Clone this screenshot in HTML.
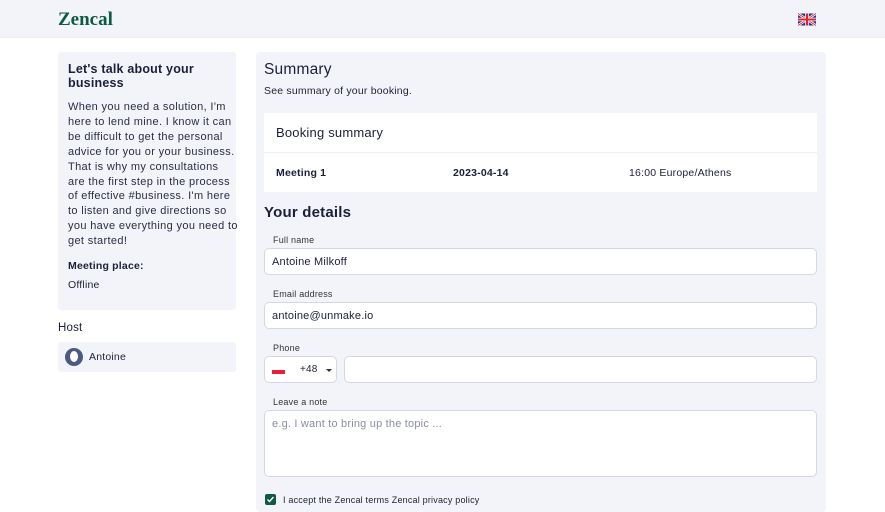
<!DOCTYPE html><html><head><style>
*{box-sizing:border-box;margin:0;padding:0}
body{width:885px;height:502px;overflow:hidden;background:#fff;font-family:"Liberation Sans",sans-serif;color:#1c1f3a;position:relative;letter-spacing:0.2px}
.hdr{position:absolute;left:0;top:0;width:885px;height:38px;background:#f3f4f9;border-bottom:1px solid #eceef4}
.logo{position:absolute;left:58px;top:9px;font-family:"Liberation Serif",serif;font-weight:bold;font-size:19px;color:#0e5a43;letter-spacing:0}
.abs{position:absolute}
.lc{left:58px;top:52px;width:178px;height:258px;background:#f3f4f9;border-radius:3px;padding:10px}
.mc{left:256px;top:52px;width:570px;height:460px;background:#f3f4f9;border-radius:4px}
.lbl{font-size:9px;color:#333;position:absolute;left:273px}
.inp{position:absolute;left:264px;width:553px;height:27px;background:#fff;border:1px solid #d5d8e3;border-radius:5px;font-size:11px;padding:7px 7px}
</style></head><body>
<div class="hdr"><div class="logo">Zencal</div>
<svg class="abs" style="left:798px;top:13px" width="18" height="13" viewBox="0 0 60 40"><rect width="60" height="40" fill="#1f3a93"/><path d="M0 0L60 40M60 0L0 40" stroke="#fff" stroke-width="8"/><path d="M0 0L60 40M60 0L0 40" stroke="#e0202a" stroke-width="3"/><path d="M30 0V40M0 20H60" stroke="#fff" stroke-width="12"/><path d="M30 0V40M0 20H60" stroke="#e0202a" stroke-width="7"/></svg></div>
<div class="abs lc"><div style="font-weight:bold;font-size:12.5px;line-height:14px">Let's talk about your<br>business</div>
<div style="font-size:11px;line-height:14.9px;margin-top:10px;color:#2a2d45;white-space:nowrap;letter-spacing:0.35px">When you need a solution, I'm<br>here to lend mine. I know it can<br>be difficult to get the personal<br>advice for you or your business.<br>That is why my consultations<br>are the first step in the process<br>of effective #business. I'm here<br>to listen and give directions so<br>you have everything you need to<br>get started!</div>
<div style="font-weight:bold;font-size:10.5px;margin-top:11px">Meeting place:</div>
<div style="font-size:10.5px;margin-top:7px">Offline</div></div>
<div class="abs" style="left:58px;top:322px;font-size:11.5px">Host</div>
<div class="abs" style="left:58px;top:342px;width:178px;height:30px;background:#f3f4f9;border-radius:3px">
<div class="abs" style="left:7px;top:6px;width:18px;height:18px;border-radius:50%;background:#4a5a80;overflow:hidden"><div class="abs" style="left:5px;top:3px;width:8px;height:11px;border-radius:50%;background:#fff"></div></div>
<div class="abs" style="left:31px;top:9px;font-size:10.5px">Antoine</div></div>
<div class="abs mc"></div>
<div class="abs" style="left:264px;top:61px;font-size:15.5px">Summary</div>
<div class="abs" style="left:264px;top:85px;font-size:10.5px">See summary of your booking.</div>
<div class="abs" style="left:264px;top:113px;width:553px;height:79px;background:#fff">
<div class="abs" style="left:12px;top:12px;font-size:13px">Booking summary</div>
<div class="abs" style="left:0;top:39px;width:553px;border-top:1px solid #eef0f4"></div>
<div class="abs" style="left:12px;top:54px;font-size:10.5px;font-weight:bold">Meeting 1</div>
<div class="abs" style="left:189px;top:54px;font-size:10.5px;font-weight:bold">2023-04-14</div>
<div class="abs" style="left:365px;top:54px;font-size:10.5px">16:00 Europe/Athens</div></div>
<div class="abs" style="left:264px;top:204px;font-size:15px;font-weight:bold">Your details</div>
<div class="lbl" style="top:235px">Full name</div><div class="inp" style="top:248px">Antoine Milkoff</div>
<div class="lbl" style="top:289px">Email address</div><div class="inp" style="top:302px">antoine@unmake.io</div>
<div class="lbl" style="top:343px">Phone</div>
<div class="inp" style="top:356px;width:73px"><span class="abs" style="left:7px;top:13px;width:13px;height:4px;background:#e8203a"></span><span class="abs" style="left:35px;top:7px;font-size:10px">+48</span><span class="abs" style="left:61px;top:12px;border:3px solid transparent;border-top:3px solid #333"></span></div>
<div class="inp" style="top:356px;left:344px;width:473px"></div>
<div class="lbl" style="top:397px">Leave a note</div>
<div class="inp" style="top:410px;height:67px;color:#8a8ea8">e.g. I want to bring up the topic ...</div>
<div class="abs" style="left:265px;top:494px;width:11px;height:11px;background:#0e5a43;border-radius:2px"><svg class="abs" style="left:1px;top:1px" width="9" height="9" viewBox="0 0 9 9"><path d="M1.5 4.5L3.5 6.5L7.5 2" stroke="#fff" stroke-width="1.4" fill="none"/></svg></div>
<div class="abs" style="left:283px;top:495px;font-size:9px">I accept the Zencal terms Zencal privacy policy</div>
</body></html>
